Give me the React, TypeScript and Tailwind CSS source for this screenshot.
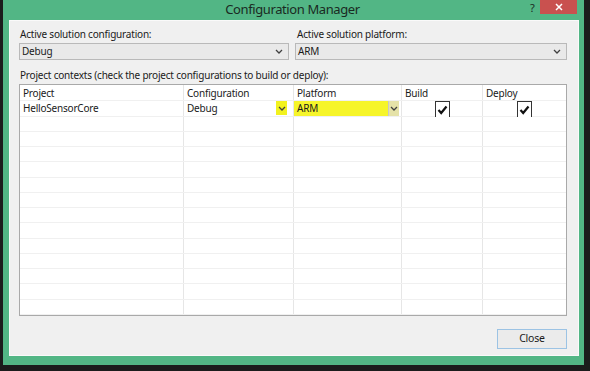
import React from "react";

const font = { fontFamily: '"Noto Sans", "Open Sans", sans-serif' };

function Chevron({ className = "" }: { className?: string }) {
  return (
    <svg width="8" height="5" viewBox="0 0 8 5" className={className}>
      <path d="M1 1 L4 4 L7 1" fill="none" stroke="#404040" strokeWidth="1.3" />
    </svg>
  );
}

function Check() {
  return (
    <svg width="11" height="10" viewBox="0 0 11 10">
      <path d="M1.5 5 L4.2 8 L9.5 1.5" fill="none" stroke="#111" strokeWidth="2.2" />
    </svg>
  );
}

const cols = ["w-[164px]", "w-[110px]", "w-[108px]", "w-[81px]", "flex-1"];

function EmptyRow() {
  return (
    <div className="flex h-[15.5px] border-b border-[#f0f0f0]">
      {cols.map((c, i) => (
        <div key={i} className={`${c} ${i < 4 ? "border-r border-[#e6e6e6]" : ""}`} />
      ))}
    </div>
  );
}

export default function App() {
  return (
    <div className="w-[590px] h-[371px] bg-[#1b1c1c] overflow-hidden text-[#1a1a1a]" style={font}>
      <div className="pl-[3px] pr-[6px] pb-[6px] h-full">
        <div className="h-full bg-[#52b685] flex flex-col">
          {/* title bar */}
          <div className="h-[20px] flex items-start relative">
            <div className="flex-1 flex justify-center pt-[1px]">
              <span className="text-[13px] leading-[17px] tracking-[-0.4px] text-[#1a2a22] mr-[2px]">Configuration Manager</span>
            </div>
            <span className="absolute left-[527px] top-[1px] text-[11px] leading-[13px] text-[#1a2a22]">?</span>
            <div className="absolute left-[537px] top-0 w-[37px] h-[14px] bg-[#c9514f] flex items-center justify-center">
              <svg width="8" height="8" viewBox="0 0 8 8">
                <path d="M1 1 L7 7 M7 1 L1 7" stroke="#fff" strokeWidth="1.5" />
              </svg>
            </div>
          </div>
          {/* content */}
          <div className="mx-[6px] mr-[5px] mb-[9px] flex-1 bg-[#f0f0f0] border border-[#fafafa] flex flex-col pl-[9px] pr-[11px] text-[10px] tracking-[-0.2px]">
            <div className="flex gap-[6px] mt-[6px]">
              <div className="w-[270px] flex flex-col">
                <div className="leading-[14px] pl-[1px]">Active solution configuration:</div>
                <div className="mt-[2px] h-[17px] border border-[#b9b9b9] bg-[#e9e9e9] flex items-center justify-between pl-[2px] pr-[5px]">
                  <span>Debug</span>
                  <Chevron />
                </div>
              </div>
              <div className="flex-1 flex flex-col">
                <div className="leading-[14px] pl-[2px]">Active solution platform:</div>
                <div className="mt-[2px] h-[17px] border border-[#b9b9b9] bg-[#e9e9e9] flex items-center justify-between pl-[2px] pr-[5px]">
                  <span>ARM</span>
                  <Chevron />
                </div>
              </div>
            </div>
            <div className="leading-[14px] mt-[8px] pl-[1px]">
              Project contexts (check the project configurations to build or deploy):
            </div>
            <div className="mt-[2px] h-[232px] border border-[#a9a9a9] bg-white flex flex-col overflow-hidden">
              <div className="flex h-[16px] border-b border-[#f0f0f0] leading-[16px]">
                <div className={`${cols[0]} border-r border-[#e6e6e6] pl-[3px]`}>Project</div>
                <div className={`${cols[1]} border-r border-[#e6e6e6] pl-[3px]`}>Configuration</div>
                <div className={`${cols[2]} border-r border-[#e6e6e6] pl-[3px]`}>Platform</div>
                <div className={`${cols[3]} border-r border-[#e6e6e6] pl-[3px]`}>Build</div>
                <div className={`${cols[4]} pl-[3px]`}>Deploy</div>
              </div>
              <div className="flex h-[15.5px] border-b border-[#f0f0f0] leading-[15px]">
                <div className={`${cols[0]} border-r border-[#e6e6e6] pl-[3px]`}>HelloSensorCore</div>
                <div className={`${cols[1]} border-r border-[#e6e6e6] pl-[3px] flex justify-between`}>
                  <span>Debug</span>
                  <div className="w-[11px] h-[14px] bg-[#f2f21e] flex items-center justify-center mr-[6px]">
                    <Chevron />
                  </div>
                </div>
                <div className={`${cols[2]} border-r border-[#e6e6e6] flex`}>
                  <div className="flex-1 bg-[#f6f52a] pl-[3px]">ARM</div>
                  <div className="w-[11px] bg-[#e5e2a8] border-l border-[#c8c8c8] flex items-center justify-center">
                    <Chevron />
                  </div>
                  <div className="w-[2px]" />
                </div>
                <div className={`${cols[3]} border-r border-[#e6e6e6] flex justify-center`}>
                  <div className="w-[15px] h-[16px] border-x border-t border-[#333] bg-white flex items-center justify-center">
                    <Check />
                  </div>
                </div>
                <div className={`${cols[4]} flex justify-center`}>
                  <div className="w-[15px] h-[16px] border-x border-t border-[#333] bg-white flex items-center justify-center">
                    <Check />
                  </div>
                </div>
              </div>
              {Array.from({ length: 13 }).map((_, i) => (
                <EmptyRow key={i} />
              ))}
            </div>
            <div className="flex justify-end mt-[13px]">
              <div className="w-[70px] h-[20px] border border-[#9cc3e4] bg-[#ebebeb] flex items-center justify-center text-[10.5px]">
                Close
              </div>
            </div>
          </div>
        </div>
      </div>
    </div>
  );
}
